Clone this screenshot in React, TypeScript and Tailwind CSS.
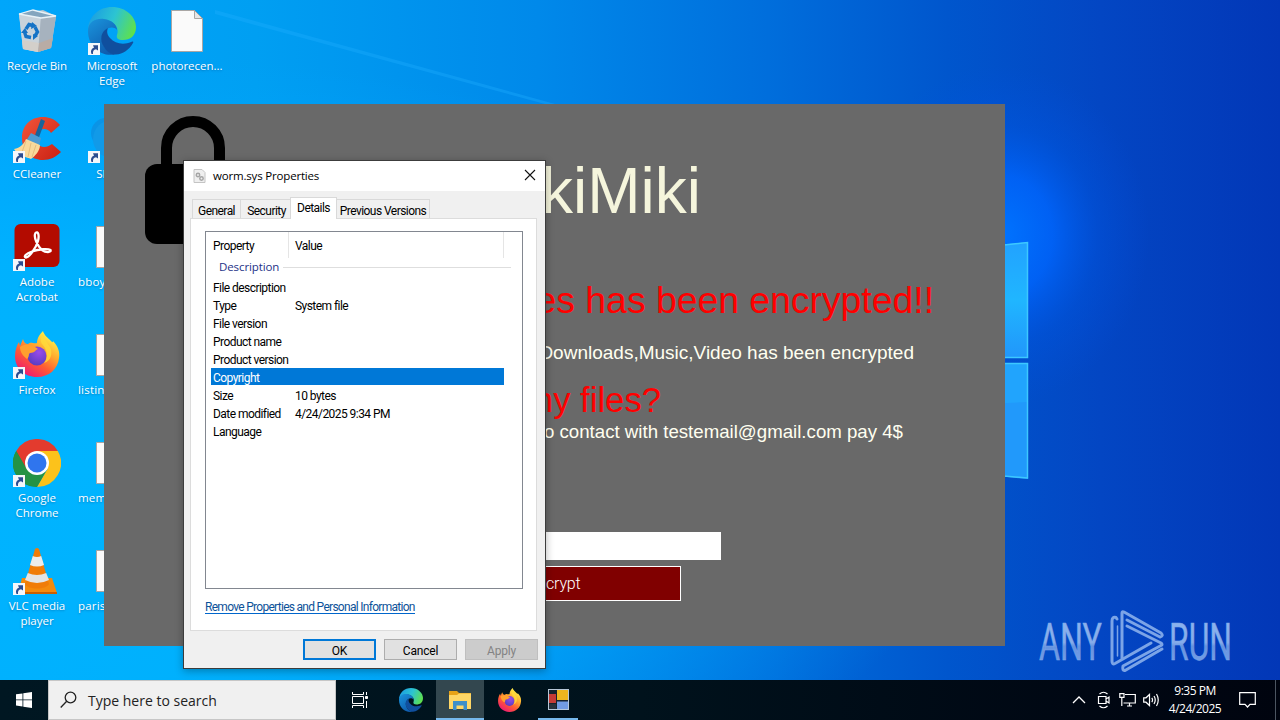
import type { ReactNode } from "react";

function Wallpaper() {
  return (
    <svg className="absolute inset-0" width="1280" height="720" viewBox="0 0 1280 720">
      <defs>
        <linearGradient id="base" x1="0" y1="0" x2="1280" y2="0" gradientUnits="userSpaceOnUse">
          <stop offset="0" stopColor="#00a6fb" />
          <stop offset="0.2" stopColor="#009ff2" />
          <stop offset="0.42" stopColor="#0089ea" />
          <stop offset="0.6" stopColor="#006edc" />
          <stop offset="0.74" stopColor="#0056cd" />
          <stop offset="0.86" stopColor="#0346c3" />
          <stop offset="1" stopColor="#0237b7" />
        </linearGradient>
        <radialGradient id="left" cx="0" cy="0" r="1" gradientUnits="userSpaceOnUse" gradientTransform="translate(80 470) scale(900 420)">
          <stop offset="0" stopColor="#00b4ff" />
          <stop offset="0.5" stopColor="#00b4ff" stopOpacity="0.8" />
          <stop offset="1" stopColor="#00a8ff" stopOpacity="0" />
        </radialGradient>
        <radialGradient id="glow" cx="0" cy="0" r="1" gradientUnits="userSpaceOnUse" gradientTransform="translate(1000 235) scale(150 170)">
          <stop offset="0" stopColor="#0074ff" />
          <stop offset="0.35" stopColor="#0066ff" stopOpacity="0.8" />
          <stop offset="0.65" stopColor="#0058e8" stopOpacity="0.35" />
          <stop offset="1" stopColor="#0050e0" stopOpacity="0" />
        </radialGradient>
        <linearGradient id="pane" x1="0" y1="0" x2="0" y2="1">
          <stop offset="0" stopColor="#22a2ff" />
          <stop offset="0.5" stopColor="#20b6ff" />
          <stop offset="1" stopColor="#2196fb" />
        </linearGradient>
      </defs>
      <rect width="1280" height="720" fill="url(#base)" />
      <rect width="1280" height="720" fill="url(#left)" />
      <rect width="1280" height="720" fill="url(#glow)" />
      <path d="M215 10 L555 104 L545 104 L215 14Z" fill="#20b0ff" opacity="0.35" />
      <path d="M900 256 L1028 242 V358 H900Z" fill="url(#pane)" />
      <path d="M900 363 H1028 V479 L900 467Z" fill="#2199fb" />
      <path d="M900 363 H1028 V402 L900 408Z" fill="#21a4fd" />
      <path d="M900 256 L1027.500 242.500 V357.500 H900" fill="none" stroke="#3cc8ff" strokeWidth="1.500" />
      <path d="M900 363.500 H1027.500 V478 L900 467" fill="none" stroke="#3cc8ff" strokeWidth="1.500" />
    </svg>
  );
}

function Shortcut({ children }: { children: ReactNode }) {
  return (
    <div className="relative h-12 w-12">
      {children}
      <svg className="absolute left-0 top-9" width="12" height="12" viewBox="0 0 12 12">
        <rect width="12" height="12" fill="#f4f6fa" />
        <path d="M3.500 11 C2.300 8 3.500 5.300 6 4.800 L5 2.200 L10 2.200 L10 7.600 L8 6.300 C5.500 6.800 4.700 8.500 5 11Z" fill="#2b4c90" />
      </svg>
    </div>
  );
}

function RecycleBin() {
  return (
    <svg width="48" height="48" viewBox="0 0 48 48">
      <path d="M6 7 L10 42 L25 45 L38 41 L43 9 L30 3Z" fill="#b9c6d1" />
      <path d="M6 7 L28 10 L25 45 L10 42Z" fill="#c9d3db" />
      <path d="M28 10 L43 9 L38 41 L25 45Z" fill="#a6b2be" />
      <path d="M9 33 L26 36 L25 45 L10 42Z" fill="#d3cfca" />
      <path d="M26 36 L40 31 L38 41 L25 45Z" fill="#b9aca5" />
      <path d="M6 7 L20 3 L43 9 L28 11Z" fill="#84a5be" stroke="#e8f2f8" strokeWidth="1.300" />
      <g fill="none" stroke="#1573c6" strokeWidth="3.400">
        <path d="M13 22 L16 17.500 L20 18.500" />
        <path d="M22 20 L24.500 25 L22 29" />
        <path d="M18 30.500 L13 29.500 L11.500 25" />
      </g>
      <path d="M19 15 L24 19 L18 22Z M20 27 L20 33 L25 29Z M8 26 L12 21 L15 26Z" fill="#1573c6" />
    </svg>
  );
}

function EdgeIcon({ size, id }: { size: number; id: string }) {
  return (
    <svg width={size} height={size} viewBox="0 0 48 48">
      <defs>
        <linearGradient id={id + "a"} x1="0" y1="0.300" x2="1" y2="0.600">
          <stop offset="0" stopColor="#1b9de2" />
          <stop offset="0.5" stopColor="#2cc4d2" />
          <stop offset="1" stopColor="#5fe14b" />
        </linearGradient>
        <linearGradient id={id + "b"} x1="0" y1="0" x2="0.600" y2="1">
          <stop offset="0" stopColor="#1a95dd" />
          <stop offset="1" stopColor="#0f5cae" />
        </linearGradient>
      </defs>
      <path d="M0 22 C1 9 11 0 24 0 C38 0 48 10 48 20 C48 29 42 33 35 33 C30 33 28 31 29 28 C30 25 30 22 28 19 C23 11 8 10 0 22Z" fill={"url(#" + id + "a)"} />
      <path d="M0 24 C0 14 9 11 16 12 C24 13 29 18 29 23 C25 18 16 21 14 29 C12 38 20 46 27 47.500 C12 50 0 39 0 24Z" fill={"url(#" + id + "b)"} />
      <path d="M20 21 C13 24 11 33 16 40 C19 45 24 48 28 47.500 C35 47 41 43 45 36 C46 34.500 44.500 34 43 35 C36 38 27 37 22 31 C19 28 18.500 24 20 21Z" fill="#104f9e" />
    </svg>
  );
}

function FileIcon() {
  return (
    <svg width="48" height="48" viewBox="0 0 48 48">
      <path d="M8.500 3.500 H31.500 L39.500 11.500 V44.500 H8.500Z" fill="#fafafa" stroke="#a9a6a4" />
      <path d="M31.500 3.500 V11.500 H39.500Z" fill="#e6e6e6" stroke="#a9a6a4" />
    </svg>
  );
}

function CCleaner() {
  return (
    <svg width="48" height="48" viewBox="0 0 48 48">
      <defs>
        <linearGradient id="cc" x1="0" y1="0" x2="1" y2="1">
          <stop offset="0" stopColor="#f2553a" />
          <stop offset="1" stopColor="#c92012" />
        </linearGradient>
      </defs>
      <path d="M47 10 C42 4 36 2 30 2 C17 2 9 11 9 23 C9 36 18 45 30 45 C37 45 43 42 48 37 L39 29 C36 31 34 32 31 32 C26 32 23 28 23 23 C23 17 26 14 31 14 C34 14 36 15 38 18Z" fill="url(#cc)" />
      <path d="M28 4 L32 6 L25 25 L21 23Z" fill="#17649b" />
      <path d="M18 18 L28 23 L26 31 L13 26Z" fill="#4d9bd1" />
      <path d="M13 24 L27 30 C27 36 22 41 18 44 C14 42 6 42 1 34 C7 33 11 29 13 24Z" fill="#f8d99b" />
      <path d="M13 26 L9 37 M18 28 L15 42 M23 30 L19 42" stroke="#e6bd7c" strokeWidth="1" />
    </svg>
  );
}

function Skype() {
  return (
    <svg width="48" height="48" viewBox="0 0 48 48">
      <circle cx="18" cy="18" r="15" fill="#0a94e6" />
      <circle cx="31" cy="31" r="14" fill="#0a7cd0" />
      <circle cx="24" cy="24" r="19" fill="#119ae8" />
    </svg>
  );
}

function Acrobat() {
  return (
    <svg width="48" height="48" viewBox="0 0 48 48">
      <rect x="1.500" y="1" width="45" height="43" rx="6" fill="#b30b00" />
      <path d="M22.500 10 C25 7.500 26.500 12 25 18 C23 25 16 34.500 13 34.500 C10 34 13 30.500 19 28.500 C26 26 35 25.500 37.500 27 C38.500 29.500 33 30 29 27 C25 23.500 20 14 22.500 10Z" fill="none" stroke="#fff" strokeWidth="2.300" />
    </svg>
  );
}

function FirefoxIcon({ size, id }: { size: number; id: string }) {
  return (
    <svg width={size} height={size} viewBox="0 0 48 48">
      <defs>
        <linearGradient id={id + "f"} x1="0.800" y1="0.100" x2="0.250" y2="0.950">
          <stop offset="0" stopColor="#fff04a" />
          <stop offset="0.350" stopColor="#ffa92d" />
          <stop offset="0.650" stopColor="#ff5a34" />
          <stop offset="1" stopColor="#ee1d70" />
        </linearGradient>
        <radialGradient id={id + "p"} cx="0.600" cy="0.300" r="0.800">
          <stop offset="0" stopColor="#9a4bea" />
          <stop offset="1" stopColor="#503bbd" />
        </radialGradient>
      </defs>
      <path d="M30 0 C31 4 35 7 38 10 C39 11 40 12 40 10 C45 15 47 21 46 27 C45 38 36 46 24 46 C11 46 2 37 2 25 C2 19 4 14 6 11 L7 15 L10 8 C11 12 13 13 15 13 C18 10 20 13 24 12 C24 7 27 3 30 0Z" fill={"url(#" + id + "f)"} />
      <circle cx="24" cy="25" r="9.500" fill={"url(#" + id + "p)"} />
      <path d="M7 16 C12 12 20 14 25 18 C22 19 22 22 17 22 C15 23 17 25 14 28 C10 25 7 21 7 16Z" fill="#ffa02e" />
      <path d="M29 13 C34 18 36 26 31 32 C38 30 40 22 37 16 C35 13 31 8 30 3 C28 6 27 10 29 13Z" fill="#ffdb3b" opacity="0.800" />
    </svg>
  );
}

function Chrome() {
  return (
    <svg width="48" height="48" viewBox="0 0 48 48">
      <path d="M24 24 L24 48 A24 24 0 0 1 3.200 12Z" fill="#249245" />
      <path d="M24 12 H44.800 A24 24 0 0 1 24 48 L34.400 30Z" fill="#fcc21b" />
      <path d="M24 12 H44.800 A24 24 0 0 0 3.200 12 L13.600 30Z" fill="#e33b2e" />
      <path d="M3.200 12 L13.600 30 L24 36 L34.400 30 L24 48 A24 24 0 0 1 3.200 12Z" fill="#249245" />
      <circle cx="24" cy="24" r="12" fill="#fff" />
      <circle cx="24" cy="24" r="9.500" fill="#2f75ee" />
    </svg>
  );
}

function Vlc() {
  return (
    <svg width="48" height="48" viewBox="0 0 48 48">
      <path d="M9 31 H39 L44 46 H5Z" fill="#f48a0c" />
      <path d="M5 45 H44 V47 H5Z" fill="#c95f00" />
      <path d="M22 2 Q24 0 26 2 L36 37 C33 43 15 43 12 37Z" fill="#f07c08" />
      <path d="M19.800 9 Q24 11 28.200 9 L31 18 Q24 21 17 18Z" fill="#ececec" />
      <path d="M14.800 26 Q24 30 33.200 26 L36 33 Q24 39 12 33Z" fill="#e4e4e4" />
    </svg>
  );
}

function DesktopItem({ icon, label, shortcut = true, left = false }: { icon: ReactNode; label: string; shortcut?: boolean; left?: boolean }) {
  return (
    <div className="flex h-[108px] w-[75px] flex-col items-center pr-px pt-[7px]">
      {shortcut ? <Shortcut>{icon}</Shortcut> : <div className="h-12 w-12">{icon}</div>}
      <div
        className={
          left
            ? "mt-[3px] w-full whitespace-pre pl-[3px] text-left text-[11.5px] leading-[15px] tracking-[0.2px] text-white"
            : "mt-[3px] whitespace-pre text-center text-[11.5px] leading-[15px] text-white"
        }
      >
        {label}
      </div>
    </div>
  );
}

function Desktop() {
  return (
    <div className="absolute left-0 top-0 grid grid-flow-col grid-rows-[repeat(6,108px)] font-['Open_Sans',sans-serif] [text-shadow:0_1px_2px_rgba(0,40,90,0.35)]">
      <DesktopItem icon={<RecycleBin />} label="Recycle Bin" shortcut={false} />
      <DesktopItem icon={<CCleaner />} label="CCleaner" />
      <DesktopItem icon={<Acrobat />} label={"Adobe\nAcrobat"} />
      <DesktopItem icon={<FirefoxIcon size={48} id="d" />} label="Firefox" />
      <DesktopItem icon={<Chrome />} label={"Google\nChrome"} />
      <DesktopItem icon={<Vlc />} label={"VLC media\nplayer"} />
      <DesktopItem icon={<EdgeIcon size={48} id="d" />} label={"Microsoft\nEdge"} />
      <DesktopItem icon={<Skype />} label="Skype" />
      <DesktopItem icon={<FileIcon />} label="bboy" shortcut={false} left />
      <DesktopItem icon={<FileIcon />} label="listing" shortcut={false} left />
      <DesktopItem icon={<FileIcon />} label="mem" shortcut={false} left />
      <DesktopItem icon={<FileIcon />} label="paris" shortcut={false} left />
      <DesktopItem icon={<FileIcon />} label="photorecen..." shortcut={false} />
    </div>
  );
}

function MessageWindow() {
  return (
    <div className="absolute left-[104px] top-[104px] flex h-[542px] w-[901px] flex-col bg-[#696969] font-['Liberation_Sans',sans-serif]">
      <svg className="absolute left-[41px] top-3" width="80" height="128" viewBox="0 0 80 128">
        <path d="M21.500 60 V32 A26.500 26.500 0 0 1 74.500 32 V60" fill="none" stroke="#000" strokeWidth="11" />
        <rect x="0" y="48" width="96" height="80" rx="12" fill="#000" />
      </svg>
      <div className="mr-[304px] mt-[51px] text-right text-[64px] leading-[72px] text-[#f5f5dc]">kiMiki</div>
      <div className="mr-[71px] mt-[48px] text-right text-[37.33px] leading-[50px] text-[#f00]">es has been encrypted!!</div>
      <div className="mr-[91px] mt-[16px] text-right text-[19px] leading-[24px] text-[#fffff0]">Downloads,Music,Video has been encrypted</div>
      <div className="mr-[344px] mt-[15px] text-right text-[34.67px] leading-[40px] text-[#f00]">my files?</div>
      <div className="mr-[102px] text-right text-[18.67px] leading-[24px] text-[#fffff0]">to contact with testemail@gmail.com pay 4$</div>
      <div className="ml-[300px] mt-[88px] h-7 w-[317px] bg-white" />
      <div className="ml-[300px] mt-[6px] flex h-[35px] w-[277px] items-center border border-white bg-[#800000] pl-[141px] font-['Roboto',sans-serif] text-[16px] font-light tracking-[-0.2px] text-white">
        crypt
      </div>
    </div>
  );
}

const properties = [
  ["File description", ""],
  ["Type", "System file"],
  ["File version", ""],
  ["Product name", ""],
  ["Product version", ""],
  ["Copyright", ""],
  ["Size", "10 bytes"],
  ["Date modified", "4/24/2025 9:34 PM"],
  ["Language", ""],
];

function PropertiesDialog() {
  return (
    <div className="absolute left-[183px] top-[160px] flex h-[509px] w-[363px] flex-col border border-[#3c3c3c] bg-[#f0f0f0] font-['Roboto',sans-serif] text-[12px] tracking-[-0.55px] text-black shadow-[0_2px_8px_rgba(0,0,0,0.3)]">
      <div className="flex h-[30px] items-center bg-white pl-[9px] pr-[9px]">
        <svg width="13" height="14" viewBox="0 0 13 14">
          <path d="M1 0.500 H9 L12 3.500 V13.500 H1Z" fill="#efefef" stroke="#c4c4c4" />
          <circle cx="5" cy="6" r="1.700" fill="none" stroke="#a5a5a5" strokeWidth="1.500" />
          <circle cx="8.500" cy="9.500" r="1.700" fill="none" stroke="#a5a5a5" strokeWidth="1.500" />
        </svg>
        <span className="ml-[7px] flex-1 font-['Open_Sans',sans-serif] text-[11.5px] tracking-[-0.18px]">worm.sys Properties</span>
        <svg className="-mt-[2px]" width="12" height="12" viewBox="0 0 12 12">
          <path d="M1 1 L11 11 M11 1 L1 11" stroke="#111" strokeWidth="1.100" />
        </svg>
      </div>
      <div className="flex h-[27px] items-end pl-2">
        <div className="flex h-[19px] w-[49px] items-center justify-center border border-b-0 border-[#d9d9d9] pt-[3px]">General</div>
        <div className="flex h-[19px] w-[49px] items-center justify-center border-t border-[#d9d9d9] pl-[2px] pt-[3px]">Security</div>
        <div className="relative -mb-px flex h-[22px] w-[47px] items-center justify-center border border-b-0 border-[#d9d9d9] bg-white pb-px">Details</div>
        <div className="flex h-[19px] w-[93px] items-center justify-center whitespace-nowrap border border-b-0 border-l-0 border-[#d9d9d9] pt-[3px]">Previous Versions</div>
      </div>
      <div className="ml-[6px] h-[413px] w-[347px] border border-[#dcdcdc] bg-white pl-[14px] pt-3">
        <div className="flex h-[358px] w-[318px] flex-col border border-[#828790]">
          <div className="flex h-[26px] pl-[7px]">
            <span className="flex w-[75px] items-center pt-[2px]">Property</span>
            <span className="flex h-full w-[216px] items-center border-x border-[#e5e5e5] pl-[6px] pt-[2px]">Value</span>
          </div>
          <div className="flex h-[18px] items-center pl-[13px] font-['Open_Sans',sans-serif] text-[11.5px] tracking-[-0.1px] text-[#1e3287]">
            Description
            <span className="ml-1 mr-[11px] h-px flex-1 bg-[#dedede]" />
          </div>
          <div className="mt-[2px] flex flex-col">
            {properties.map(([name, value]) => (
              <div key={name} className="ml-[5px] h-[18px] w-[293px]">
                <div className={name === "Copyright" ? "flex h-[17px] items-center bg-[#0078d7] pl-[2px] pt-[2px] text-white" : "flex h-[17px] items-center pl-[2px] pt-[2px]"}>
                  <span className="w-[82px] whitespace-nowrap">{name}</span>
                  <span>{value}</span>
                </div>
              </div>
            ))}
          </div>
        </div>
        <div className="mt-3 w-fit border-b border-[#0066cc] text-[12px] leading-[12px] tracking-[-0.71px] text-[#0d5299]">Remove Properties and Personal Information</div>
      </div>
      <div className="mt-2 flex gap-2 pl-[119px] tracking-[-0.2px]">
        <div className="flex h-[21px] w-[73px] items-center justify-center border-2 border-[#0078d7] bg-[#e1e1e1] pt-[2px]">OK</div>
        <div className="flex h-[21px] w-[73px] items-center justify-center border border-[#adadad] bg-[#e1e1e1] pt-[2px]">Cancel</div>
        <div className="flex h-[21px] w-[73px] items-center justify-center border border-[#bfbfbf] bg-[#cccccc] pt-[2px] text-[#838383]">Apply</div>
      </div>
    </div>
  );
}

function Watermark() {
  return (
    <svg className="absolute left-[1034px] top-[606px]" width="210" height="70" viewBox="0 0 210 70">
      <defs>
        <linearGradient id="wm" x1="0" y1="0" x2="0" y2="1">
          <stop offset="0" stopColor="#8db6ef" />
          <stop offset="0.500" stopColor="#86acea" />
          <stop offset="0.560" stopColor="#6593e0" />
          <stop offset="1" stopColor="#7fa6e8" />
        </linearGradient>
      </defs>
      <g fill="url(#wm)" stroke="#7fa6e8" strokeWidth="0.500" fontFamily="Roboto, sans-serif" fontSize="52">
        <text x="5" y="54" textLength="63" lengthAdjust="spacingAndGlyphs">ANY</text>
        <text x="135" y="54" textLength="63" lengthAdjust="spacingAndGlyphs">RUN</text>
      </g>
      <g fill="none" stroke="#7ba4e7" strokeWidth="3" strokeLinejoin="round" strokeLinecap="round">
        <path d="M83 13 L82 11.500 Q78 10.500 78 15 V55 Q78 59 81 57.500 L117 37" />
        <path d="M83.500 20 V50" strokeWidth="1.500" />
        <path d="M88 52 V7 Q88 5 90 6 L127 27 Q130 30 126 31 L93 14" />
        <path d="M93 20 L127 37 Q129 38.500 127 39.500 L89 60 Q88 65 91 64.500 L128 43" />
      </g>
    </svg>
  );
}

function Taskbar() {
  return (
    <div className="absolute bottom-0 left-0 flex h-10 w-full bg-linear-to-r from-[#001722] via-[#00121c] to-[#00040f] text-white">
      <div className="flex w-12 items-center justify-center">
        <svg width="16" height="16" viewBox="0 0 16 16" fill="#fff">
          <path d="M0 2.300 L6.500 1.400 V7.500 H0Z M7.300 1.300 L16 0 V7.500 H7.300Z M0 8.300 H6.500 V14.500 L0 13.600Z M7.300 8.300 H16 V16 L7.300 14.700Z" />
        </svg>
      </div>
      <div className="flex w-72 items-center border border-[#c6c6c6] bg-[#f0f0f0] pl-[11px] font-['Open_Sans',sans-serif] text-[14px] text-[#222]">
        <svg width="17" height="18" viewBox="0 0 17 18" fill="none" stroke="#222" strokeWidth="1.300">
          <circle cx="10.500" cy="6.500" r="5.300" />
          <path d="M6.700 10.300 L0.700 16.500" />
        </svg>
        <span className="ml-[11px]">Type here to search</span>
      </div>
      <div className="mr-[3px] flex w-12 items-center justify-center">
        <svg width="17" height="16" viewBox="0 0 17 16" fill="none" stroke="#fff" strokeWidth="1">
          <path d="M0.500 0 V2.500 H11.500 V0 M0.500 16 V13.500 H11.500 V16 M0.500 4.500 H11.500 V11.500 H0.500Z M14.500 0 V3 M14.500 9 V16" />
          <path d="M13.500 4.500 H15.500 V6.500 H13.500Z" fill="#fff" />
        </svg>
      </div>
      <div className="flex gap-px">
        <div className="flex w-12 items-center justify-center">
          <EdgeIcon size={24} id="t" />
        </div>
        <div className="flex w-12 items-center justify-center border-b-2 border-[#76b9ed] bg-[#33474f] pt-[2px]">
          <svg width="22" height="19" viewBox="0 0 22 19">
            <path d="M0 0 H8 L10 2 H22 V18 H0Z" fill="#e8a317" />
            <path d="M0 4 H8 L10 2.500 H22 V18 H0Z" fill="#ffd766" />
            <path d="M4 19 V10 H18 V19 H14.500 V14.500 H7.500 V19Z" fill="#3d8fc9" />
          </svg>
        </div>
        <div className="flex w-12 items-center justify-center">
          <FirefoxIcon size={25} id="t" />
        </div>
        <div className="flex w-12 flex-col items-center">
          <div className="flex h-[38px] items-center pt-[1px]">
            <svg width="21" height="21" viewBox="0 0 21 21">
              <rect x="0.500" y="0.500" width="20" height="20" fill="#15222d" stroke="#b7c7d8" />
              <path d="M9 1 H20 V11 H9Z" fill="#edb51f" />
              <path d="M9 12.500 H20 V20 H9Z" fill="#729be2" />
              <path d="M1 5 H8 V14 H1Z" fill="#c53a35" />
              <path d="M1 15 H8 V20 H1Z" fill="#27313c" />
            </svg>
          </div>
          <div className="h-[2px] w-10 bg-[#76b9ed]" />
        </div>
      </div>
      <div className="ml-auto flex items-center">
        <svg className="mr-[11px]" width="14" height="8" viewBox="0 0 14 8" fill="none" stroke="#fff" strokeWidth="1.300">
          <path d="M1 7 L7 1 L13 7" />
        </svg>
        <svg className="mr-[8px]" width="14" height="18" viewBox="0 0 14 18" fill="none" stroke="#fff" strokeWidth="1.200">
          <path d="M1.500 5.500 H9 V12.500 H1.500Z M9 8 L12 6 V12 L9 10 M2.500 3 Q6.500 -0.500 10.500 3 M2.500 15 Q6.500 18.500 10.500 15" />
        </svg>
        <svg className="mr-[7px]" width="17" height="14" viewBox="0 0 17 14" fill="none" stroke="#fff" strokeWidth="1.200">
          <path d="M6 1.500 H16.300 V10 H4.500 M8 13 H13 M10.500 10 V13 M0.800 0.700 H5 V4.300 H0.800Z M2.800 4.300 V13" />
        </svg>
        <svg width="17" height="14" viewBox="0 0 17 14" fill="none" stroke="#fff" strokeWidth="1.200">
          <path d="M0.700 4.800 H3 L6.500 1.500 V12.500 L3 9.200 H0.700Z M8.800 4.800 Q10.300 7 8.800 9.200 M11 3 Q13.500 7 11 11 M13.500 1 Q17 7 13.500 13" />
        </svg>
        <div className="w-[70px] text-center font-['Open_Sans',sans-serif] text-[12px] leading-[18px] tracking-[-0.5px]">
          9:35 PM
          <br />
          4/24/2025
        </div>
        <svg className="ml-[9px]" width="17" height="16" viewBox="0 0 17 16" fill="none" stroke="#fff" strokeWidth="1.200">
          <path d="M0.700 0.700 H16.300 V12.300 H11 L8.500 15 L6 12.300 H0.700Z" />
        </svg>
        <div className="ml-[19px] mr-1 h-10 w-px bg-[#4c5561]" />
      </div>
    </div>
  );
}

export default function App() {
  return (
    <div className="relative h-[720px] w-[1280px] overflow-hidden bg-[#00a6fb]">
      <Wallpaper />
      <Desktop />
      <MessageWindow />
      <PropertiesDialog />
      <Watermark />
      <Taskbar />
    </div>
  );
}
